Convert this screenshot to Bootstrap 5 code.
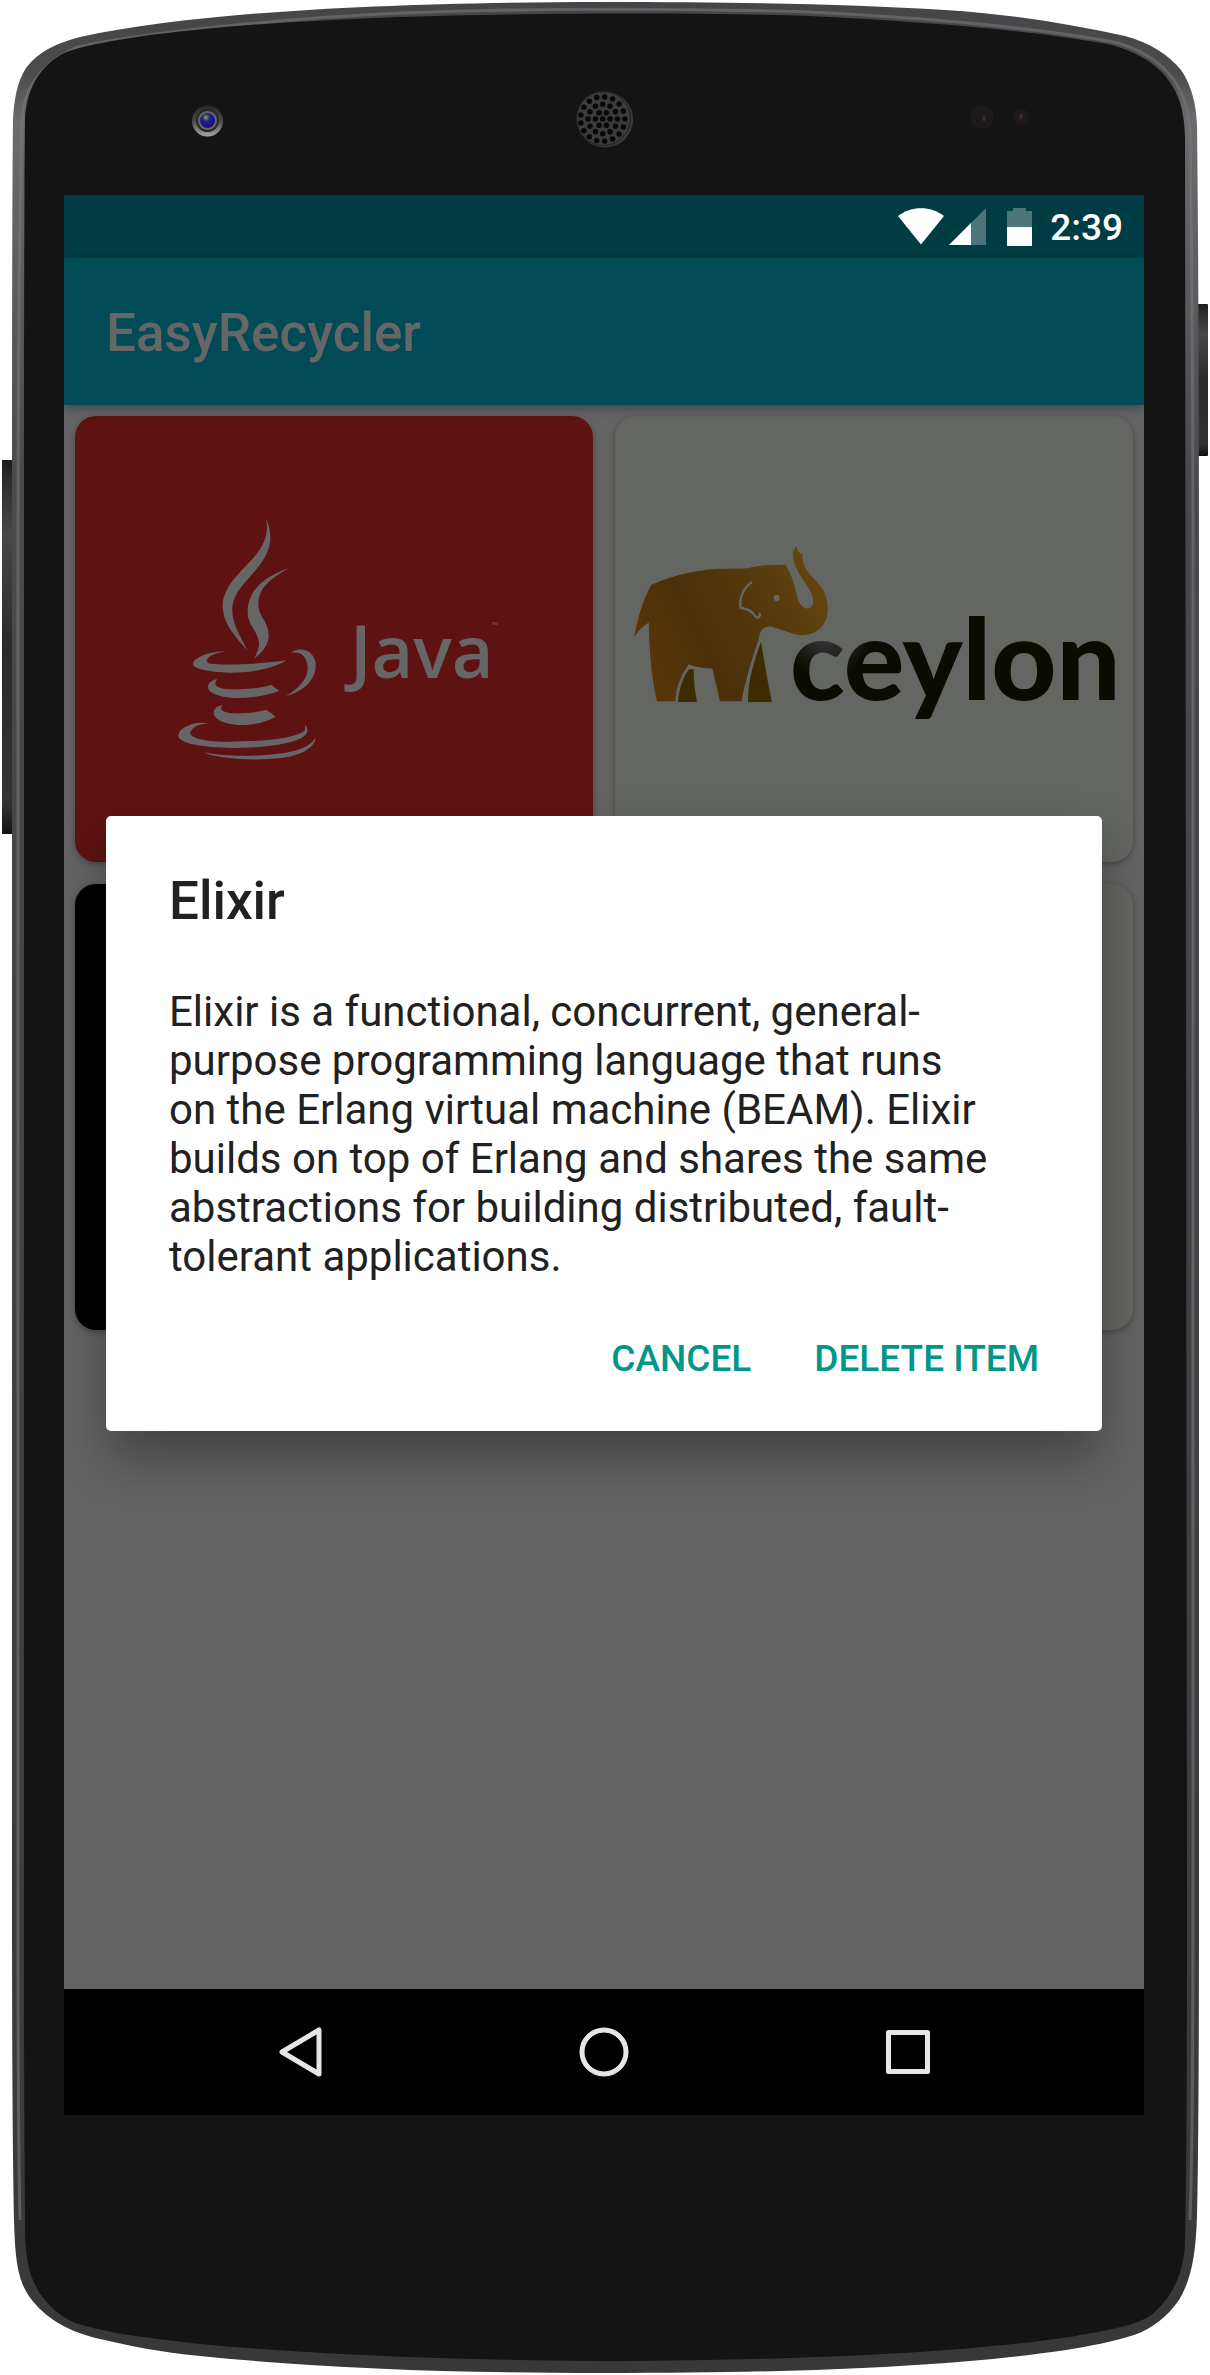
<!DOCTYPE html>
<html lang="en">
<head>
<meta charset="utf-8">
<meta name="viewport" content="width=device-width, initial-scale=1">
<title>EasyRecycler</title>
<link href="https://cdn.jsdelivr.net/npm/bootstrap@5.3.0/dist/css/bootstrap.min.css" rel="stylesheet">
<style>
  body { font-family: Roboto, "Noto Sans", sans-serif; background: #fff; }
  .phone { padding: 195px 66px 260px 64px; }
  .phone-shell { inset: 0; width: 100%; height: 100%; }
  .screen { aspect-ratio: 9 / 16; background: #646464; }
  .status-bar { height: 63px; background: #003c43; color: #fff; padding-right: 21px; }
  .status-time { font-size: 37px; line-height: 44px; font-weight: 500; margin-left: 18px; padding-top: 3px; }
  .battery { margin-left: 21px; }
  .app-bar { height: 147px; background: #004b55; color: #666; padding: 3px 42px 0; box-shadow: 0 3px 10px rgba(0,0,0,.35); z-index: 1; }
  .app-title, .dialog-title { font-size: 53px; line-height: 62px; font-weight: 500; }
  .tiles { --bs-gutter-x: 22px; --bs-gutter-y: 22px; margin: 0; padding: 11px 0; row-gap: 22px; }
  .tiles > * { margin: 0; }
  .tile { border: 0; border-radius: 21px; overflow: hidden; background: #646662; box-shadow: 0 2px 6px rgba(0,0,0,.3); }
  .tile svg { width: 100%; height: auto; display: block; }
  .tile-java { background: #5f1212; }
  .tile-elixir { background: #000; }
  .overlay { inset: 0; z-index: 2; padding: 0 42px; }
  .dialog { background: #fff; color: #212121; border-radius: 5px; padding: 54px 63px 50px; box-shadow: 0 28px 52px rgba(0,0,0,.33); }
  .dialog-title { margin-bottom: 55px; }
  .dialog-text { font-size: 42px; line-height: 49px; margin-bottom: 56px; padding-right: 45px; }
  .dialog-actions { gap: 63px; }
  .dialog-btn { background: none; border: 0; padding: 0; color: #009688; font-size: 37px; line-height: 44px; font-weight: 500; }
  .nav-keys { height: 126px; background: #000; }
  .nav-key { background: none; border: 0; padding: 0; width: 304px; line-height: 0; }
</style>
</head>
<body>
<div class="phone position-relative">
  <svg class="phone-shell position-absolute" viewBox="0 0 1210 2375" preserveAspectRatio="none" aria-hidden="true">
    <defs>
      <linearGradient id="rim" x1="0" y1="0" x2="0" y2="1">
        <stop offset="0" stop-color="#454547"/><stop offset=".03" stop-color="#4c4c4e"/><stop offset=".05" stop-color="#6c6c6f"/><stop offset=".2" stop-color="#4a4a4d"/><stop offset=".7" stop-color="#3e3e40"/><stop offset="1" stop-color="#383838"/>
      </linearGradient>
      <linearGradient id="key" x1="0" y1="0" x2="0" y2="1">
        <stop offset="0" stop-color="#1c1c1c"/><stop offset=".06" stop-color="#2e2e2e"/><stop offset=".2" stop-color="#474747"/><stop offset=".5" stop-color="#2a2a2a"/><stop offset=".92" stop-color="#333"/><stop offset="1" stop-color="#111"/>
      </linearGradient>
      <linearGradient id="lens" x1="0" y1="0" x2="0" y2="1">
        <stop offset="0" stop-color="#262626"/><stop offset=".5" stop-color="#4a4a4a"/><stop offset="1" stop-color="#a5a5a5"/>
      </linearGradient>
      <radialGradient id="iris" cx=".4" cy=".3" r=".7">
        <stop offset="0" stop-color="#8a9a9c"/><stop offset=".35" stop-color="#2a2a60"/><stop offset=".7" stop-color="#1111b8"/><stop offset="1" stop-color="#22104a"/>
      </radialGradient>
      <linearGradient id="grille" x1="0" y1="0" x2="1" y2="1">
        <stop offset="0" stop-color="#1b1b1b"/><stop offset=".5" stop-color="#3c3c3c"/><stop offset=".85" stop-color="#3a3a3a"/><stop offset="1" stop-color="#999"/>
      </linearGradient>
    </defs>
    <rect x="2" y="460" width="12" height="374" fill="url(#key)"/>
    <rect x="1196" y="304" width="12" height="152" rx="1" fill="url(#key)"/>
    <path fill="url(#rim)" d="M13 120C14 100 17 82 26 68C38 52 56 43 80 37C130 26 190 19 250 14C350 6 470 2 604 2C740 2 850 4 945 10C1010 14 1070 24 1125 36C1150 43 1168 54 1181 70C1192 86 1196 104 1197 125Q1199 300 1199 600V1900Q1199 2130 1197 2215C1196 2255 1191 2280 1179 2300C1168 2316 1152 2329 1134 2335C1112 2342 1090 2346 1066 2350C950 2367 800 2373 604 2373C450 2373 320 2368 200 2356C160 2352 130 2346 100 2339C64 2331 40 2314 27 2293C17 2276 15 2255 14 2220Q12 2130 12 1900V480Q12 200 13 120Z"/>
    <path fill="none" stroke="#77777b" stroke-width="3" opacity=".6" d="M22 120C23 90 40 64 75 48C110 38 250 20 400 13C540 8 670 8 810 12C930 18 1050 29 1118 43C1160 56 1187 82 1190 130Q1193 300 1193 600V1900Q1193 2140 1190 2220"/>
    <path fill="none" stroke="#77777b" stroke-width="3" opacity=".6" d="M22 120Q18 260 18 600V1900Q18 2140 20 2220"/>
    <path fill="#141414" d="M25 118C27 90 38 68 62 54C80 46 115 40 150 35C240 24 320 20 400 17C530 13 680 12 810 16C930 22 1040 31 1112 45C1150 56 1168 74 1177 95C1183 108 1185 125 1185 140L1187 1900Q1187 2140 1185 2245C1183 2275 1172 2298 1150 2316C1130 2328 1100 2331 1070 2337C950 2354 800 2360 604 2361C440 2360 310 2354 200 2344C150 2338 110 2334 75 2323C50 2312 34 2290 29 2268C25 2250 25 2235 25 2215Q24 2130 24 1900V480Q24 200 25 118Z"/>
    <circle cx="207.500" cy="121" r="15.500" fill="url(#lens)"/>
    <circle cx="207.500" cy="120.500" r="10.500" fill="#6b6664" stroke="#2a2a2a" stroke-width="2"/>
    <circle cx="207.500" cy="120.500" r="7.500" fill="url(#iris)"/>
    <circle cx="605" cy="119.500" r="28" fill="url(#grille)"/>
    <circle cx="603.500" cy="118.500" r="27" fill="#3b3b3b" stroke="#202020"/>
    <g fill="none" stroke="#080808" stroke-width="5.500" stroke-linecap="round">
      <path d="M602.700 119h.01"/>
      <circle cx="602.700" cy="119" r="7.300" pathLength="6" stroke-dasharray="0 1"/>
      <circle cx="602.700" cy="119" r="14.700" pathLength="12" stroke-dasharray="0 1"/>
      <circle cx="602.700" cy="119" r="22.200" pathLength="17" stroke-dasharray="0 1"/>
    </g>
    <circle cx="982" cy="117" r="12" fill="#1b1b1b"/><path d="M984 116v5" stroke="#472a1c" stroke-width="2.500"/>
    <circle cx="1021" cy="117" r="8" fill="#1b1b1b"/><path d="M1021 114v5" stroke="#472a1c" stroke-width="2.500"/>
  </svg>

  <main class="screen position-relative d-flex flex-column overflow-hidden">
    <div class="status-bar d-flex align-items-center justify-content-end flex-shrink-0">
      <svg width="46" height="37" viewBox="0 0 46 37" aria-hidden="true"><path fill="#fff" d="M0 8C13-2.500 33-2.500 46 8L23 36.500Z"/></svg>
      <svg class="ms-1" width="38" height="37" viewBox="0 0 38 37" aria-hidden="true"><path fill="#4d767b" d="M38 0V37H1Z"/><path fill="#fff" d="M23 15V37H1Z"/></svg>
      <svg class="battery" width="25" height="38" viewBox="0 0 25 38" aria-hidden="true"><path fill="#4d767b" d="M0 3H6V0H19V3H25V38H0Z"/><path fill="#fff" d="M0 19H25V38H0Z"/></svg>
      <span class="status-time">2:39</span>
    </div>

    <div class="position-relative d-flex flex-column flex-grow-1">
      <header class="app-bar position-relative d-flex align-items-center">
        <h1 class="app-title m-0">EasyRecycler</h1>
      </header>

      <div class="tiles row row-cols-2">
        <div class="col">
          <div class="card tile tile-java">
            <svg viewBox="0 0 518 446" role="img" aria-label="Java">
              <g transform="translate(85 84) scale(.33333)" fill="#666">
                <path d="M319 57C343 115 329 158 294 202C252 255 215 280 217 337C219 376 242 411 262 451C225 408 189 370 188 320C187 259 242 217 283 170C316 132 325 98 319 57Z"/>
                <path d="M386 205C334 235 294 263 295 316C296 351 326 364 326 406C325 439 307 456 282 477C294 453 301 438 295 418C288 388 262 374 263 331C265 265 323 226 386 205Z"/>
                <path d="M197 455C150 459 131 480 145 489C180 499 310 491 379 481C334 509 270 518 208 518C155 517 104 509 99 493C98 473 153 452 197 455Z"/>
                <path d="M392 459C411 442 459 442 467 489C472 540 424 578 379 588C420 563 444 535 443 502C441 470 423 452 392 459Z"/>
                <path d="M173 537C156 556 171 565 205 568C249 570 297 565 334 555L358 573C316 588 268 595 221 594C174 591 145 579 144 562C144 549 155 540 173 537Z"/>
                <path d="M187 615C176 629 190 637 218 640C255 641 287 638 319 629L348 650C315 667 283 675 241 675C192 673 161 657 161 638C162 626 171 618 187 615Z"/>
                <path d="M145 671C112 670 86 689 92 704C110 724 181 727 248 724C330 722 397 714 430 695C436 690 437 683 434 674C446 683 443 698 436 705C407 733 309 744 218 744C133 743 58 731 55 709C55 679 114 661 145 671Z"/>
                <path d="M130 757C195 771 300 770 366 760C425 750 453 738 467 711C468 739 429 766 366 774C282 783 176 778 130 757Z"/>
              </g>
              <text x="275" y="262" font-family="Open Sans, sans-serif" font-size="72" font-weight="600" fill="#666">Java</text>
              <text x="417" y="212" font-family="Open Sans, sans-serif" font-size="8" fill="#666">™</text>
            </svg>
          </div>
        </div>
        <div class="col">
          <div class="card tile">
            <svg viewBox="0 0 518 446" role="img" aria-label="Ceylon">
              <defs>
                <linearGradient id="hide" x1="0" y1=".6" x2="1" y2=".2">
                  <stop offset="0" stop-color="#5a3508"/><stop offset=".3" stop-color="#4a300a"/><stop offset=".65" stop-color="#54390d"/><stop offset="1" stop-color="#66480e"/>
                </linearGradient>
                <radialGradient id="shade" gradientUnits="userSpaceOnUse" cx="212" cy="215" r="46">
                  <stop offset="0" stop-color="#3c3c3c"/><stop offset=".5" stop-color="#252525"/><stop offset="1" stop-color="#0b0b00"/>
                </radialGradient>
              </defs>
              <text x="175" y="284" font-family="Lato, sans-serif" font-size="113" font-weight="900" fill="url(#shade)">ceylon</text>
              <g transform="translate(-5 104) scale(.33333)">
                <path fill="#3f2b00" d="M237 448H251Q251 500 261 546H204C207 509 217 475 237 448ZM453 365C464 430 474 494 486 546H414C413 480 434 420 453 365Z"/>
                <path fill="url(#hide)" stroke="#646662" stroke-width="5" d="M122 193C190 162 270 146 330 144C360 141 390 145 412 142C450 132 490 131 528 132C546 158 556 192 565 232C572 264 598 273 607 250C610 229 596 208 582 188C558 155 544 125 546 98Q552 79 561 76L566 93L573 98L581 95C573 130 593 158 621 182C648 208 655 234 656 263C658 312 626 348 573 348C540 346 516 330 482 322C460 320 451 336 449 357C426 423 407 480 397 546H328L305 448Q260 447 237 436C213 470 199 505 198 546H139C120 470 115 390 114 312Q92 326 68 360C79 299 96 238 122 193Z"/>
                <path d="M426 186C398 204 387 239 392 263C409 267 424 270 433 285Q440 296 447 291Q452 284 447 279" fill="none" stroke="#646662" stroke-width="7"/>
                <ellipse cx="500" cy="234" rx="9" ry="10" fill="#646662"/>
              </g>
            </svg>
          </div>
        </div>
        <div class="col"><div class="card tile tile-elixir"><svg viewBox="0 0 518 446" aria-hidden="true"></svg></div></div>
        <div class="col"><div class="card tile"><svg viewBox="0 0 518 446" aria-hidden="true"></svg></div></div>
      </div>

      <div class="overlay position-absolute d-flex align-items-center">
        <section class="dialog w-100" role="dialog" aria-labelledby="dlg-title" aria-describedby="dlg-text">
          <h2 class="dialog-title" id="dlg-title">Elixir</h2>
          <p class="dialog-text" id="dlg-text">Elixir is a functional, concurrent, general-purpose programming language that runs on the Erlang virtual machine (BEAM). Elixir builds on top of Erlang and shares the same abstractions for building distributed, fault-tolerant applications.</p>
          <div class="dialog-actions d-flex justify-content-end">
            <button type="button" class="dialog-btn text-uppercase">Cancel</button>
            <button type="button" class="dialog-btn text-uppercase">Delete item</button>
          </div>
        </section>
      </div>
    </div>

    <nav class="nav-keys d-flex align-items-center justify-content-center flex-shrink-0" aria-label="System">
      <button type="button" class="nav-key" aria-label="Back"><svg width="50" height="50" viewBox="0 0 50 50" fill="none" stroke="#e6e6e6" stroke-width="5" stroke-linejoin="round"><path d="M44 3V47L7 25Z"/></svg></button>
      <button type="button" class="nav-key" aria-label="Home"><svg width="50" height="50" viewBox="0 0 50 50" fill="none" stroke="#e6e6e6" stroke-width="5"><circle cx="25" cy="25" r="22"/></svg></button>
      <button type="button" class="nav-key" aria-label="Recent apps"><svg width="50" height="50" viewBox="0 0 50 50" fill="none" stroke="#e6e6e6" stroke-width="5" stroke-linejoin="round"><rect x="5.500" y="5.500" width="39" height="39"/></svg></button>
    </nav>
  </main>
</div>
<script src="https://cdn.jsdelivr.net/npm/bootstrap@5.3.0/dist/js/bootstrap.bundle.min.js"></script>
</body>
</html>
